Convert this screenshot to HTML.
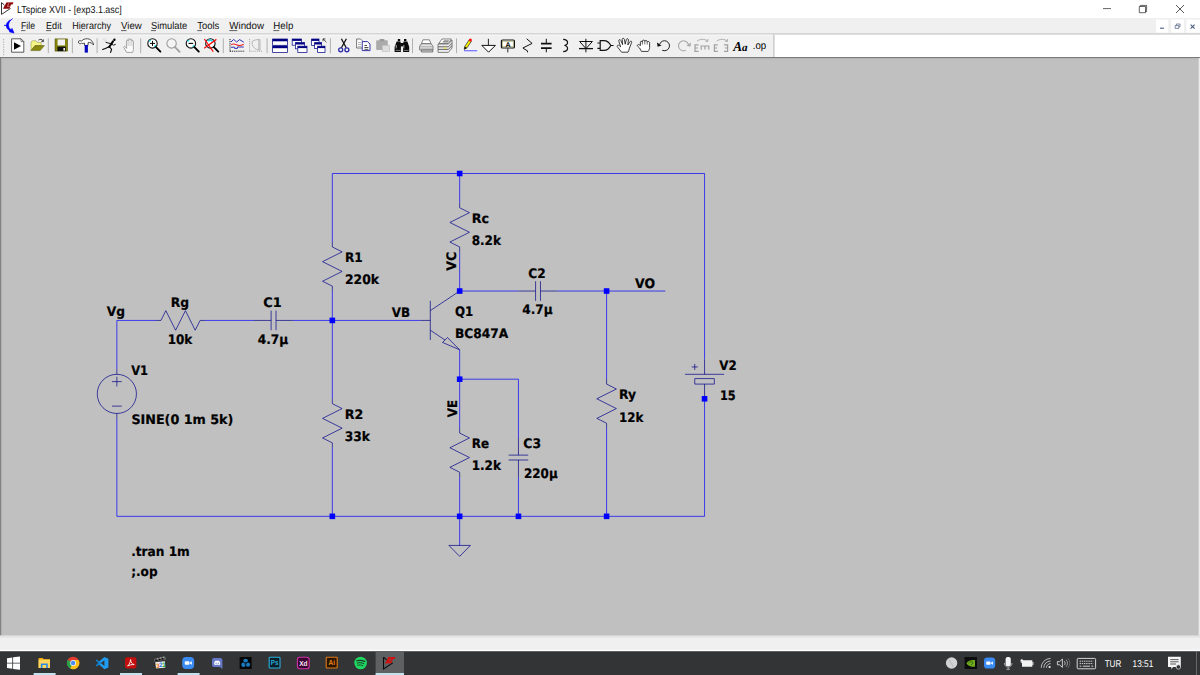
<!DOCTYPE html>
<html lang="en">
<head>
<meta charset="utf-8">
<title>LTspice XVII - [exp3.1.asc]</title>
<style>
html,body{margin:0;padding:0;background:#c0c0c0;overflow:hidden}
body{width:1200px;height:675px;position:relative;font-family:"Liberation Sans",sans-serif}
svg{position:absolute;left:0;top:0;display:block}
</style>
</head>
<body>
<svg width="1200" height="675" viewBox="0 0 1200 675" text-rendering="geometricPrecision">
<!-- window chrome -->
<rect x="0" y="0" width="1200" height="18" fill="#ffffff"/>
<rect x="0" y="18" width="1200" height="15.2" fill="#f0f0f0"/>
<rect x="0" y="33.2" width="1200" height="1.5" fill="#d9d9d9"/>
<rect x="0" y="34.7" width="773" height="22.5" fill="#f0f0f0"/>
<rect x="0" y="34.7" width="773" height="0.8" fill="#fafafa"/>
<rect x="773" y="34.7" width="1.6" height="22.5" fill="#d0d0d0"/>
<rect x="774.6" y="34.7" width="426" height="22.5" fill="#ffffff"/>
<rect x="0" y="57" width="1200" height="1.3" fill="#7a7a7a"/>
<rect x="0" y="58.3" width="1200" height="577.2" fill="#c0c0c0"/>
<rect x="0" y="58.3" width="1200" height="0.8" fill="#b4b4b4"/>
<rect x="0" y="58" width="1.3" height="577.5" fill="#828282"/>
<rect x="1.3" y="58.3" width="0.9" height="577.2" fill="#b2b2b2"/>
<rect x="1198.7" y="58" width="1.3" height="577.5" fill="#ececec"/>
<rect x="0" y="635.5" width="1200" height="2.5" fill="#e6e6e6"/>
<rect x="0" y="638" width="1200" height="12" fill="#f0f0f0"/>
<rect x="0" y="649.8" width="1200" height="1.4" fill="#ffffff"/>
<g font-family="'Liberation Sans', sans-serif" font-size="10.2" fill="#111">
<text x="17" y="12.6" textLength="104.7" lengthAdjust="spacingAndGlyphs">LTspice XVII - [exp3.1.asc]</text>
<text x="21" y="29.3" textLength="14" lengthAdjust="spacingAndGlyphs">File</text>
<text x="46" y="29.3" textLength="15.7" lengthAdjust="spacingAndGlyphs">Edit</text>
<text x="72.3" y="29.3" textLength="38.7" lengthAdjust="spacingAndGlyphs">Hierarchy</text>
<text x="121" y="29.3" textLength="20.7" lengthAdjust="spacingAndGlyphs">View</text>
<text x="151" y="29.3" textLength="36.3" lengthAdjust="spacingAndGlyphs">Simulate</text>
<text x="197.3" y="29.3" textLength="22" lengthAdjust="spacingAndGlyphs">Tools</text>
<text x="229.3" y="29.3" textLength="34.7" lengthAdjust="spacingAndGlyphs">Window</text>
<text x="273.3" y="29.3" textLength="20" lengthAdjust="spacingAndGlyphs">Help</text>
</g>

<!-- toolbar icons -->
<!-- title icon + menu icon + window controls -->
<g fill="none" stroke-linecap="butt">
<path d="M1.5 2.6 L1.5 14.4 L10.6 8.4 M1.5 2.6 L4.6 5.2" stroke="#222" stroke-width="0.9"/>
<path d="M6.200 2.400 L13.400 2.300 L12.600 4.400 L11 4.400 L9.400 8.700 L3 8.800 L4 6.800 L5.400 4.400 Z" fill="#8e0a0a" stroke="none"/>
<path d="M8.700 3.300 L7.500 6.400 L9.600 6.400" stroke="#f4eaea" stroke-width="0.500" fill="none"/>
<path d="M4 25.4 L8 25.4" stroke="#0000ff" stroke-width="0.9"/>
<path d="M12.6 18.600 L10.400 20.600" stroke="#0000ff" stroke-width="0.9"/>
<path d="M10.8 20 C9 21.8 8.4 24 8.6 26 C8.8 27.8 9.8 29 11 29.8 L12 28.4 L14 33 L9.4 31.8 L10 30.9 C7.6 29.6 6.2 27.6 6.4 25.2 C6.6 22.800 8.200 20.800 10.800 20 Z" fill="#0000ff" stroke="#0000ff" stroke-width="0.7"/>
<!-- window buttons -->
<path d="M1103 8.6 L1111 8.6" stroke="#222" stroke-width="0.7"/>
<path d="M1139.3 6.5 h6.2 v6.2 h-6.2 Z M1140.4 6.5 v-1.1 h6.2 v6.2 h-1.1" stroke="#222" stroke-width="0.7"/>
<path d="M1176 5 L1184 13 M1184 5 L1176 13" stroke="#222" stroke-width="0.75"/>
</g>
<rect x="1156" y="19.6" width="12.2" height="13" fill="#ffffff"/>
<rect x="1171" y="19.6" width="13" height="13" fill="#ffffff"/>
<rect x="1186.4" y="19.6" width="13.6" height="13" fill="#ffffff"/>
<g fill="none" stroke="#4b5c80">
<path d="M1160 28.2 h4" stroke-width="1.1"/>
<path d="M1175.2 25.6 h3.6 v2.8 h-3.6 Z M1176.4 25.4 v-1.4 h3.6 v2.8 h-1.2" stroke-width="0.7"/>
<path d="M1190.6 24.6 l4 4 M1194.6 24.6 l-4 4" stroke-width="1.1"/>
</g>
<!-- menu accelerator underlines -->
<g stroke="#000" stroke-width="0.6">
<path d="M21 30.6 h4.4 M46 30.6 h5 M80.2 30.6 h1.8 M121 30.6 h5.6 M151 30.6 h5 M197.3 30.6 h4.8 M229.3 30.6 h8 M273.3 30.6 h6"/>
</g>
<!-- toolbar gripper -->
<g fill="#b4b4b4">
<rect x="3" y="39" width="1.2" height="1.2"/><rect x="3" y="41.5" width="1.2" height="1.2"/><rect x="3" y="44" width="1.2" height="1.2"/><rect x="3" y="46.5" width="1.2" height="1.2"/><rect x="3" y="49" width="1.2" height="1.2"/><rect x="3" y="51.5" width="1.2" height="1.2"/><rect x="3" y="54" width="1.2" height="1.2"/>
</g>
<!-- separators -->
<g stroke="#a8a8a8" stroke-width="0.9">
<path d="M48.3 38.4 v14.8 M72.4 38.4 v14.8 M97.1 38.4 v14.8 M140.7 38.4 v14.8 M223.3 38.4 v14.8 M267.1 38.4 v14.8 M330.4 38.4 v14.8 M412.5 38.4 v14.8 M456.5 38.4 v14.8"/>
</g>
<!-- 1 run -->
<path d="M11.6 38.8 h9.4 l2.8 2.8 v10.6 h-12.2 Z" fill="#fff" stroke="#333" stroke-width="0.8"/>
<path d="M21 38.8 v2.8 h2.8" fill="none" stroke="#333" stroke-width="0.6"/>
<path d="M14 42.2 L21 46 L14 49.8 Z" fill="#000"/>
<!-- 2 open -->
<path d="M31 50.4 V42 l1.6 -1.2 h3.4 l1.2 1.6 h4 v3.2 h-6 Z" fill="#f4f48a" stroke="#8a8a30" stroke-width="0.5"/>
<path d="M31 50.6 L35 45.6 H44.4 L40.2 50.6 Z" fill="#8a8a10" stroke="#55550a" stroke-width="0.5"/>
<path d="M38.4 40.2 C40 38.8 42.4 39 43.2 41.2 M43.4 39.4 L43.3 41.8 L41.2 41.2" fill="none" stroke="#222" stroke-width="0.8"/>
<!-- 3 save -->
<rect x="55" y="38.9" width="12.6" height="12.2" fill="#85850c" stroke="#4a4a08" stroke-width="0.5"/>
<rect x="57.6" y="39.4" width="7.4" height="6" fill="#f2f2f2"/>
<rect x="57.4" y="46.6" width="8.4" height="4.5" fill="#111"/>
<rect x="63.4" y="48" width="1.6" height="2.6" fill="#f2f2f2"/>
<!-- 4 hammer -->
<path d="M78.6 41.2 C79.4 40.4 80.6 40.6 81.4 41.2 C82.6 39.4 85 38.6 87.6 38.8 C90.6 39 93 41.2 93.6 45 C92.2 43 90.4 42.2 88.2 42.4 L88 45.4 H84.6 L84.4 43 C83.2 43.4 82 43.8 81.4 43.2 C80.4 44 79.2 43.8 78.6 43 Z" fill="#fff" stroke="#222" stroke-width="0.8"/>
<rect x="84.7" y="45" width="3.2" height="7.6" fill="#0808c0"/>
<!-- 5 runner -->
<g fill="none" stroke="#000" stroke-linecap="round">
<circle cx="114.4" cy="39.8" r="1.2" fill="#000" stroke="none"/>
<path d="M113 41.4 L109.2 47" stroke-width="2"/>
<path d="M106 42.4 L110.6 43.6 L113.6 45.2 L115.4 44.4" stroke-width="0.9"/>
<path d="M109.4 46.6 L105.4 48.4 L102.6 49.4" stroke-width="1.1"/>
<path d="M109.6 47 L111.6 49.4 L110.6 52.4" stroke-width="1.1"/>
<path d="M103 39.4 L105.6 41.6 M104.6 38.8 L106.6 40.6" stroke="#bbb" stroke-width="0.5"/>
</g>
<!-- 6 hand disabled -->
<path d="M126.6 52.4 L123.8 47.6 C123.4 46.6 124.6 46 125.4 46.8 L126.6 48.4 V41 C126.6 39.8 128.2 39.8 128.2 41 V39.6 C128.2 38.4 130 38.4 130 39.6 V40 C130 38.8 131.8 38.8 131.8 40 V41.2 C131.8 40.2 133.4 40.2 133.4 41.2 V48 C133.6 50 133 51.4 132.6 52.4 Z" fill="#fafafa" stroke="#9a9a9a" stroke-width="0.9"/>
<path d="M128.2 41 V46 M130 40 V46 M131.8 41 V46" stroke="#b0b0b0" stroke-width="0.6" fill="none"/>
<!-- 7 zoom in -->
<g fill="none">
<circle cx="152.5" cy="43.4" r="4.7" fill="#fff" stroke="#111" stroke-width="1.1"/>
<path d="M149.300 41.600 A3.600 3.600 0 0 1 150.900 40 M154.200 46.700 A3.600 3.600 0 0 0 155.800 45.100" stroke="#22d8e8" stroke-width="1.300"/>
<path d="M150 43.4 h5 M152.5 40.9 v5" stroke="#000" stroke-width="1"/>
<path d="M156 47.2 L160.4 51.6" stroke="#000" stroke-width="1.9" stroke-linecap="round"/>
<!-- 8 zoom disabled -->
<circle cx="171.6" cy="43.4" r="4.7" fill="#f4f4f4" stroke="#9e9e9e" stroke-width="1.1"/>
<path d="M175 47.2 L179.6 51.8" stroke="#9e9e9e" stroke-width="1.800" stroke-linecap="round"/>
<!-- 9 zoom out -->
<circle cx="190.9" cy="43.4" r="4.7" fill="#fff" stroke="#111" stroke-width="1.1"/>
<path d="M187.700 41.600 A3.600 3.600 0 0 1 189.300 40 M192.600 46.700 A3.600 3.600 0 0 0 194.200 45.100" stroke="#22d8e8" stroke-width="1.300"/>
<path d="M188.6 43.4 h4.6" stroke="#000" stroke-width="1.1"/>
<path d="M194.4 47.2 L198.8 51.6" stroke="#000" stroke-width="1.9" stroke-linecap="round"/>
<!-- 10 zoom fit -->
<circle cx="210.4" cy="43.4" r="4.7" fill="#fff" stroke="#111" stroke-width="1.1"/>
<path d="M208 41 A3.4 3.4 0 0 1 212.6 41.4" stroke="#22d8e8" stroke-width="1.6"/>
<path d="M213.9 47.2 L218.3 51.6" stroke="#000" stroke-width="1.9" stroke-linecap="round"/>
<path d="M204.4 39 L213.2 51.6 M204.2 48.2 L216.4 39.4" stroke="#ff1010" stroke-width="1.3"/>
</g>
<!-- 11 waveform -->
<g fill="none">
<path d="M230 39 V51.4 M230 51.2 H244.2" stroke="#111" stroke-width="1" stroke-dasharray="1 0.9"/>
<path d="M231 42 L233.6 39.4 L236.6 42 L239.6 39.6 L243.8 42.2" stroke="#3030b0" stroke-width="1"/>
<path d="M231 44.6 C233 43.4 235 44 237 45 C239 46 241 45.6 243.8 44.2" stroke="#f02020" stroke-width="1.100"/>
<path d="M231 47.2 H234.6 V48.4 H237.4 V47 H243.8" stroke="#3030b0" stroke-width="1"/>
<!-- 12 disabled plot -->
<path d="M249.6 39 V51.4 M249.6 51.2 H263" stroke="#a4a4a4" stroke-width="1" stroke-dasharray="1 0.9"/>
<path d="M252 41.6 C254 39.8 258 39.4 260 39.6 M252 41.6 C252 46 254 49.4 259.4 50 M260 39.6 V50.4 M258.8 39.6 V50.4" stroke="#a8a8a8" stroke-width="0.800"/>
</g>
<!-- 13 tile -->
<g>
<rect x="272.6" y="39" width="14.8" height="6.3" fill="#fff" stroke="#1c1c90" stroke-width="0.8"/>
<rect x="272.6" y="39" width="14.8" height="2.3" fill="#000080"/>
<rect x="272.6" y="45.9" width="14.8" height="6.5" fill="#fff" stroke="#1c1c90" stroke-width="0.8"/>
<rect x="272.6" y="45.9" width="14.8" height="2.3" fill="#000080"/>
<!-- 14 cascade -->
<rect x="292.2" y="39" width="9.2" height="6.2" fill="#fff" stroke="#1c1c90" stroke-width="0.8"/>
<rect x="292.2" y="39" width="9.2" height="1.9" fill="#000080"/>
<rect x="295.4" y="42.6" width="9.2" height="6.2" fill="#fff" stroke="#1c1c90" stroke-width="0.8"/>
<rect x="295.4" y="42.6" width="9.2" height="1.9" fill="#000080"/>
<rect x="297.8" y="46.2" width="9.2" height="6.2" fill="#fff" stroke="#1c1c90" stroke-width="0.8"/>
<rect x="297.8" y="46.2" width="9.2" height="1.9" fill="#000080"/>
<!-- 15 cascade arrow -->
<rect x="311.6" y="39" width="7.4" height="6.4" fill="#fff" stroke="#1c1c90" stroke-width="0.8"/>
<rect x="311.6" y="39" width="7.4" height="1.9" fill="#000080"/>
<rect x="314.6" y="42.6" width="7" height="6" fill="#fff" stroke="#1c1c90" stroke-width="0.8"/>
<rect x="314.6" y="42.6" width="7" height="1.9" fill="#000080"/>
<rect x="317.6" y="46.2" width="7.4" height="6.2" fill="#fff" stroke="#1c1c90" stroke-width="0.8"/>
<rect x="317.6" y="46.2" width="7.4" height="1.9" fill="#000080"/>
<path d="M326.4 42.2 L323.2 39 M323 41.2 V38.9 H325.4" fill="none" stroke="#222" stroke-width="0.8"/>
</g>
<!-- 16 cut -->
<g fill="none">
<path d="M341.400 38.800 L346.200 47.800 M346.400 38.800 L341.400 47.800" stroke="#111" stroke-width="1.300"/>
<circle cx="340.700" cy="49.800" r="2" stroke="#2828a8" stroke-width="1.300"/>
<circle cx="346.900" cy="49.800" r="2" stroke="#2828a8" stroke-width="1.300"/>
</g>
<!-- 17 copy -->
<path d="M356.6 39 h4 l2 2 v7 h-6 Z" fill="#fff" stroke="#444" stroke-width="0.7"/>
<path d="M358 42.500 h3 M358 44.500 h3 M358 46.500 h3" fill="none" stroke="#9a9a9a" stroke-width="0.700"/>
<path d="M362.2 41.6 h5.2 l2.6 2.4 v6.6 h-7.8 Z" fill="#fff" stroke="#2020a0" stroke-width="0.9"/>
<path d="M364.400 45.500 h2.600 M364.400 47.500 h4 M364.400 49.300 h4" fill="none" stroke="#222" stroke-width="0.800"/>
<!-- 18 paste disabled -->
<rect x="376.2" y="40.2" width="11.6" height="9.8" rx="0.8" fill="#ababab"/>
<rect x="379.6" y="39" width="4.8" height="2.2" rx="0.6" fill="#9a9a9a"/>
<rect x="382.2" y="45.2" width="7.2" height="6.2" fill="#dedede" stroke="#b0b0b0" stroke-width="0.5"/>
<!-- 19 binoculars -->
<path d="M397.800 39 h2.400 v2.200 h-2.400 Z M404 39 h2.400 v2.200 h-2.400 Z" fill="#0a0a0a"/>
<path d="M396.600 41.600 h3.800 l0.500 2 v8.400 h-6.300 v-5 Z M403.600 41.600 h3.800 l1.800 5.400 v5 h-6.100 v-8.400 Z" fill="#0a0a0a"/>
<rect x="400.600" y="43" width="3.200" height="3.400" fill="#0a0a0a"/>
<path d="M396.200 45 v3.400 M403.800 45 v3.400" stroke="#f4f4f4" stroke-width="0.700" fill="none"/>
<path d="M395.600 50.400 h4.800 M403.800 50.400 h4.800" stroke="#e8e8e8" stroke-width="0.500" fill="none"/>
<!-- 20 print -->
<g stroke="#555" stroke-width="0.7">
<path d="M423 39.8 h6.4 l1.6 4 h-9.6 Z" fill="#fff"/>
<path d="M421.2 43.8 h10 l1.8 2.6 v3.6 h-13.4 v-3.6 Z" fill="#e4e4e4"/>
<path d="M421.4 50 h11.4 v2 h-11.4 Z" fill="#d0d0d0"/>
<path d="M420 46.6 h12.8 M420.4 48.2 h12.2" fill="none" stroke="#8a8a8a" stroke-width="0.5"/>
<!-- 21 print preview -->
<path d="M442 39 h9.4 l-3 4.4 h-9.6 Z" fill="#fff"/>
<path d="M444 40.2 h5.4 l-1.6 2.4 h-5.4 Z" fill="#909090" stroke="none"/>
<path d="M438 44 h10.4 l3.6 -4 v8 l-3.6 4.4 h-10.4 Z" fill="#ececec"/>
<path d="M438 46.8 h10.4 l3.6 -3.6 M438 49.4 h10.4 l3.6 -3.8" fill="none" stroke="#444" stroke-width="0.8"/>
</g>
<rect x="443.6" y="47.6" width="3" height="1" fill="#f0e020"/>
<!-- 22 pencil -->
<path d="M464 50.7 H477.2" stroke="#7a7aff" stroke-width="1.3"/>
<path d="M464.2 49.4 L464.8 46.4 L469.2 39.8 L471.4 41.2 L467 47.8 Z" fill="#f4f000" stroke="#222" stroke-width="0.7"/>
<path d="M464.2 49.4 L464.8 46.6 L467 48 Z" fill="#111"/>
<circle cx="470.4" cy="39.9" r="1.5" fill="#ff1010"/>
<!-- 23 ground -->
<path d="M488.4 38.8 V45.2" stroke="#111" stroke-width="0.9"/>
<path d="M481.8 45.4 H495.4 L488.6 52.2 Z" fill="#fff" stroke="#111" stroke-width="1"/>
<!-- 24 label -->
<rect x="501.4" y="40" width="13" height="8" rx="1" fill="#fff" stroke="#111" stroke-width="1.2"/>
<rect x="502.6" y="41.2" width="10.6" height="5.6" fill="none" stroke="#8a8a30" stroke-width="0.5"/>
<path d="M507.8 48.4 V52.4" stroke="#111" stroke-width="0.9"/>
<text x="505.400" y="46.900" font-family="'Liberation Sans', sans-serif" font-weight="bold" font-size="7" fill="#000">A</text>
<!-- 25-30 components -->
<g fill="none" stroke="#111" stroke-width="1">
<path d="M526.7 38.8 L532.1 43.4 L522.9 48 L527.5 50.9 V52.3"/>
<path d="M546.3 38.8 V43.2 M546.3 48.2 V52.3"/>
<path d="M541 43.600 H551.600 M541 48.100 H551.600" stroke-width="1.600"/>
<path d="M563.200 39.400 C568.800 39.600 568.800 45.200 564.400 45.500 C568.800 45.800 568.800 51.400 563.200 51.600" stroke-width="1.200"/>
<path d="M585.900 38.800 V52.300 M579.600 41.500 H592.400 L586 48.600 Z"/><path d="M579 48.600 H593" stroke-width="1.300"/>
<path d="M597.400 43 H600.200 M597.400 48.400 H600.200 M600.200 40.600 H604 C607.600 40.600 609.600 43.200 610.800 45.500 C609.600 47.800 607.600 50.400 604 50.400 H600.200 Z M610.800 45.500 H613.600" stroke-width="1.200"/>
</g>
<!-- 31 open hand -->
<path d="M621.6 52.2 L617.4 46.8 C616.6 45.6 618 44.6 619.2 45.6 L620.6 46.8 L618.8 41 C618.4 39.6 620.2 39 620.8 40.4 L622.6 44.6 L622.2 39.4 C622.2 38 624.2 38 624.4 39.4 L625.2 44.2 L626.4 39.4 C626.8 38.2 628.6 38.6 628.4 40 L627.8 45 L630 41.6 C630.8 40.6 632.2 41.4 631.6 42.6 L629.4 48.2 C629 50 628.6 51.2 628 52.2 Z" fill="#fff" stroke="#111" stroke-width="0.8"/>
<!-- 32 closed hand -->
<path d="M641.4 51.4 L639.6 48 L637.6 46.2 C636.8 45.2 638 44.2 639.2 44.8 L640.4 45.6 V42.2 C640.4 41 642.2 41 642.4 42.2 V41 C642.6 39.8 644.6 39.8 644.8 41 V41.4 C645 40.2 647 40.2 647.2 41.4 V42.2 C647.4 41.2 649.4 41.2 649.6 42.6 V47.6 C649.4 49.4 648.8 50.4 648.2 51.4 Z" fill="#fff" stroke="#111" stroke-width="0.8"/>
<path d="M642.4 42.2 V44.6 M644.8 41.4 V44.4 M647.2 42.2 V44.6" stroke="#111" stroke-width="0.6" fill="none"/>
<!-- 33 undo / 34 redo -->
<g fill="none">
<path d="M659.8 44 A5 5 0 1 1 662.2 50.2" stroke="#222" stroke-width="1"/>
<path d="M657 42.6 L657.6 46.8 L661.6 45.4 Z" fill="#111" stroke="none"/>
<path d="M688.2 44 A5 5 0 1 0 685.8 50.2" stroke="#a8a8a8" stroke-width="1.100"/>
<path d="M691 42.6 L690.4 46.8 L686.4 45.4 Z" fill="#a8a8a8" stroke="none"/>
<!-- 35 / 36 rotate mirror -->
<g stroke="#a0a0a0" stroke-width="1.200">
<path d="M698.6 44.8 H695 V51.4 H698.6 M695 48 H698"/>
<path d="M701.2 49.8 V46 H708.8 V49.8 M705 46 V49.4"/>
<path d="M697 41.2 C700 38.8 705 38.6 707.6 41.2 M707.8 39 V41.4 H705.6" stroke-width="0.800"/>
<path d="M717.8 44.8 H714.4 V51.4 H717.8 M714.4 48 H717.2"/>
<path d="M724 44.8 H727.6 V51.4 H724 M727.6 48 H724.8"/>
<path d="M716.6 41.2 C719.6 38.8 724.6 38.6 727.2 41.2 M727.4 39 V41.4 H725.2" stroke-width="0.800"/>
</g>
</g>
<!-- 37 Aa, 38 .op -->
<text x="733.200" y="50.600" textLength="14.400" lengthAdjust="spacingAndGlyphs" font-family="'Liberation Serif', serif" font-style="italic" font-weight="bold" font-size="13.600" fill="#000">A<tspan font-size="11.400">a</tspan></text>
<text x="752.8" y="48.5" textLength="13.4" lengthAdjust="spacingAndGlyphs" font-family="'Liberation Sans', sans-serif" font-size="10.600" fill="#000">.op</text>

<!-- schematic -->
<g fill="none" stroke="#0000ff" stroke-width="0.7">
<path d="M332.34 242.06 L332.34 173.5 L704.55 173.5 L704.55 359.61"/>
<path d="M459.67 173.5 L459.67 202.88"/>
<path d="M459.67 251.86 L459.67 291.04"/>
<path d="M459.67 291.04 L518.44 291.04"/>
<path d="M557.62 291.04 L665.37 291.04"/>
<path d="M606.6 291.04 L606.6 379.19"/>
<path d="M606.6 428.17 L606.6 516.33"/>
<path d="M704.55 398.78 L704.55 516.33 L116.85 516.33 L116.85 418.38"/>
<path d="M116.85 369.4 L116.85 320.43 L156.03 320.43"/>
<path d="M205 320.43 L253.98 320.43"/>
<path d="M293.16 320.43 L420.5 320.43"/>
<path d="M332.34 291.04 L332.34 398.78"/>
<path d="M332.34 447.76 L332.34 516.33"/>
<path d="M459.67 349.81 L459.67 428.17"/>
<path d="M459.67 477.14 L459.67 545.71"/>
<path d="M459.67 379.19 L518.44 379.19 L518.44 437.96"/>
<path d="M518.44 477.14 L518.44 516.33"/>
</g>
<g fill="none" stroke="#000088" stroke-width="0.7">
<path d="M332.34 242.06 L332.34 246.96 L342.13 251.86 L322.54 261.65 L342.13 271.45 L322.54 281.25 L332.34 286.14 L332.34 291.04 M459.67 202.88 L459.67 207.78 L469.47 212.68 L449.88 222.47 L469.47 232.27 L449.88 242.06 L459.67 246.96 L459.67 251.86 M332.34 398.78 L332.34 403.68 L342.13 408.58 L322.54 418.37 L342.13 428.17 L322.54 437.96 L332.34 442.86 L332.34 447.76 M459.67 428.17 L459.67 433.07 L469.47 437.96 L449.88 447.76 L469.47 457.55 L449.88 467.35 L459.67 472.25 L459.67 477.14 M606.6 379.19 L606.6 384.09 L616.39 388.99 L596.8 398.78 L616.39 408.58 L596.8 418.38 L606.6 423.27 L606.6 428.17 M156.03 320.43 L160.93 320.43 L165.82 310.63 L175.62 330.22 L185.41 310.63 L195.21 330.22 L200.11 320.43 L205 320.43 M253.98 320.43 L271.12 320.43 M276.02 320.43 L293.16 320.43 M271.12 310.63 L271.12 330.22 M276.02 310.63 L276.02 330.22 M518.44 291.04 L535.59 291.04 M540.48 291.04 L557.62 291.04 M535.59 281.24 L535.59 300.83 M540.48 281.24 L540.48 300.83 M518.44 437.96 L518.44 455.11 M518.44 460 L518.44 477.14 M508.65 455.11 L528.24 455.11 M508.65 460 L528.24 460 M420.5 320.42 L430.29 320.42 M430.29 300.83 L430.29 340.01 M430.29 310.63 L459.68 291.04 M430.29 330.22 L444.98 340.01 M442.53 342.46 L459.68 349.81 L447.43 337.57 Z M448.9 545.41 L470.45 545.41 L459.67 556.36 Z M116.85 369.4 L116.85 374.3 M116.85 413.48 L116.85 418.38 M111.95 381.64 L121.75 381.64 M116.85 376.75 L116.85 386.54 M111.95 406.13 L121.75 406.13 M704.55 359.61 L704.55 374.3 M684.96 374.3 L724.14 374.3 M694.75 378.58 L714.34 378.58 L714.34 384.09 L694.75 384.09 Z M704.55 384.09 L704.55 398.79 M691.69 366.95 L697.82 366.95 M694.75 363.89 L694.75 370.01"/>
<circle cx="116.85" cy="393.89" r="19.59"/>
</g>
<g fill="#0000ff">
<rect x="456.87" y="170.7" width="5.6" height="5.6"/>
<rect x="456.87" y="288.24" width="5.6" height="5.6"/>
<rect x="329.54" y="317.62" width="5.6" height="5.6"/>
<rect x="603.8" y="288.24" width="5.6" height="5.6"/>
<rect x="456.87" y="376.39" width="5.6" height="5.6"/>
<rect x="329.54" y="513.53" width="5.6" height="5.6"/>
<rect x="456.87" y="513.53" width="5.6" height="5.6"/>
<rect x="515.64" y="513.53" width="5.6" height="5.6"/>
<rect x="603.8" y="513.53" width="5.6" height="5.6"/>
<rect x="701.75" y="395.98" width="5.6" height="5.6"/>
</g>
<g font-family="'DejaVu Sans', 'Liberation Sans', sans-serif" font-weight="bold" font-size="13.1" fill="#000" stroke="#000" stroke-width="0.22">
<text x="106.7" y="316.4" textLength="18.3" lengthAdjust="spacingAndGlyphs">Vg</text>
<text x="170.7" y="307.2" textLength="18.3" lengthAdjust="spacingAndGlyphs">Rg</text>
<text x="167.7" y="343.6" textLength="24.6" lengthAdjust="spacingAndGlyphs">10k</text>
<text x="263.3" y="307.3" textLength="18.4" lengthAdjust="spacingAndGlyphs">C1</text>
<text x="257.7" y="343.5" textLength="30.6" lengthAdjust="spacingAndGlyphs">4.7µ</text>
<text x="345" y="262.3" textLength="17.7" lengthAdjust="spacingAndGlyphs">R1</text>
<text x="345" y="284" textLength="34" lengthAdjust="spacingAndGlyphs">220k</text>
<text x="391.7" y="316.6" textLength="18.3" lengthAdjust="spacingAndGlyphs">VB</text>
<text x="471.7" y="223.1" textLength="17.3" lengthAdjust="spacingAndGlyphs">Rc</text>
<text x="471.7" y="245.3" textLength="29.3" lengthAdjust="spacingAndGlyphs">8.2k</text>
<text x="528.3" y="278.3" textLength="17.4" lengthAdjust="spacingAndGlyphs">C2</text>
<text x="522.3" y="314.3" textLength="30.4" lengthAdjust="spacingAndGlyphs">4.7µ</text>
<text x="635" y="287.7" textLength="20" lengthAdjust="spacingAndGlyphs">VO</text>
<text x="455" y="316.3" textLength="18.3" lengthAdjust="spacingAndGlyphs">Q1</text>
<text x="455" y="337.7" textLength="53.3" lengthAdjust="spacingAndGlyphs">BC847A</text>
<text x="719.3" y="370.4" textLength="17.4" lengthAdjust="spacingAndGlyphs">V2</text>
<text x="720" y="399.8" textLength="15.7" lengthAdjust="spacingAndGlyphs">15</text>
<text x="619" y="399.4" textLength="17" lengthAdjust="spacingAndGlyphs">Ry</text>
<text x="619" y="421.6" textLength="24.3" lengthAdjust="spacingAndGlyphs">12k</text>
<text x="471.7" y="448" textLength="17.3" lengthAdjust="spacingAndGlyphs">Re</text>
<text x="471.7" y="470.3" textLength="29.3" lengthAdjust="spacingAndGlyphs">1.2k</text>
<text x="523.3" y="448" textLength="17.7" lengthAdjust="spacingAndGlyphs">C3</text>
<text x="524" y="478" textLength="33.7" lengthAdjust="spacingAndGlyphs">220µ</text>
<text x="131.2" y="374.8" textLength="16.9" lengthAdjust="spacingAndGlyphs">V1</text>
<text x="131.4" y="424" textLength="102" lengthAdjust="spacingAndGlyphs">SINE(0 1m 5k)</text>
<text x="344.8" y="419.3" textLength="18.5" lengthAdjust="spacingAndGlyphs">R2</text>
<text x="344.8" y="441.1" textLength="25.2" lengthAdjust="spacingAndGlyphs">33k</text>
<text x="131.2" y="556.3" textLength="58.6" lengthAdjust="spacingAndGlyphs">.tran 1m</text>
<text x="131.2" y="575.8" textLength="26.4" lengthAdjust="spacingAndGlyphs">;.op</text>
<text transform="translate(456 270.7) rotate(-90)" textLength="19" lengthAdjust="spacingAndGlyphs">VC</text>
<text transform="translate(456.7 417.3) rotate(-90)" textLength="17.3" lengthAdjust="spacingAndGlyphs">VE</text>
</g>
<!-- taskbar -->
<rect x="0" y="651.3" width="1200" height="23.7" fill="#333436"/>
<rect x="375.6" y="651.3" width="28.4" height="23.7" fill="#5f6062"/>
<g fill="#bfe2ee">
<rect x="33.6" y="673" width="22" height="2"/>
<rect x="120" y="673" width="22" height="2"/>
<rect x="177.6" y="673" width="22" height="2"/>
<rect x="375.6" y="673" width="28.4" height="2"/>
</g>
<!-- start -->
<path d="M7 658.2 L12.3 657.4 V662.7 H7 Z M13.1 657.3 L20 656.4 V662.7 H13.1 Z M7 663.5 H12.3 V668.8 L7 668 Z M13.1 663.5 H20 V669.8 L13.1 668.9 Z" fill="#ffffff"/>
<!-- explorer -->
<path d="M38.6 658 h4.2 l1 1.2 h6.2 v8.8 h-11.4 Z" fill="#f2a900"/>
<rect x="38.6" y="659.6" width="11.4" height="8.4" fill="#ffd75e"/>
<path d="M40.8 668 v-4.6 h7 v4.6 h-1.7 v-2.9 h-3.6 v2.9 Z" fill="#2a8be6"/>
<!-- chrome -->
<g>
<circle cx="73.1" cy="663" r="6.2" fill="#e33b2e"/>
<path d="M73.1 663 L67.73 659.9 A6.2 6.2 0 0 0 73.1 669.2 L76.2 663.9 Z" fill="#2ca14a"/>
<path d="M73.1 663 L70 668.37 A6.2 6.2 0 0 0 78.47 659.9 L73.1 659.9 Z" fill="#fbc116"/>
<path d="M73.1 663 L67.73 659.9 A6.2 6.2 0 0 0 70 668.37 Z" fill="#2ca14a"/>
<circle cx="73.1" cy="663" r="2.9" fill="#f4f4f4"/>
<circle cx="73.1" cy="663" r="2.2" fill="#4a8af4"/>
</g>
<!-- vscode -->
<path d="M104.4 657 L108.4 658.8 V667.4 L104.4 669.2 L97.4 663.1 Z M104.4 660.2 L100.8 663.1 L104.4 666 Z" fill="#1f9cf0" fill-rule="evenodd"/>
<path d="M95.6 660.6 L96.8 659.6 L101.4 663.1 L96.8 666.6 L95.6 665.6 L98.4 663.1 Z" fill="#0f7fd0"/>
<!-- acrobat -->
<rect x="125" y="657.2" width="11.4" height="11.4" rx="2" fill="#c40f0f"/>
<path d="M127.6 666 C129.4 664.4 130.4 662 130.6 659.6 C130.8 662.4 132 664.2 134.2 664.6 C131.8 664.4 129.4 665 127.6 666 Z" fill="none" stroke="#fff" stroke-width="0.9" stroke-linejoin="round"/>
<!-- mpc -->
<path d="M154.400 659.400 L164.800 656.800 L165.400 659.400 L155 662 Z" fill="#111" stroke="#cfcfcf" stroke-width="0.400"/>
<path d="M156.600 659 l1.200 -0.300 l0.400 1.700 M159.600 658.200 l1.200 -0.300 l0.400 1.700 M162.600 657.500 l1.200 -0.300 l0.400 1.700" stroke="#f0f0f0" stroke-width="0.600" fill="none"/>
<path d="M154.800 661.800 L165.400 660.800 L165.800 668 L155.600 669 Z" fill="#f4f4f4" stroke="#111" stroke-width="0.700"/>
<g font-family="'Liberation Sans', sans-serif" font-weight="bold" font-size="6.4">
<text x="155.900" y="667.600" fill="#f07820">3</text><text x="159" y="667.400" fill="#2a78e0">2</text><text x="162.200" y="667.200" fill="#28a030">1</text>
</g>
<!-- zoom -->
<rect x="182.2" y="657" width="12" height="12" rx="4" fill="#3a8cf4"/>
<rect x="184.8" y="661.2" width="4.6" height="3.6" rx="0.8" fill="#fff"/>
<path d="M189.9 662.6 L191.8 661.2 V664.8 L189.9 663.4 Z" fill="#fff"/>
<!-- discord -->
<path d="M212 660 a2 2 0 0 1 2 -2 h6.4 a2 2 0 0 1 2 2 v9 l-2.4 -2 h-6 a2 2 0 0 1 -2 -2 Z" fill="#6778c8"/>
<path d="M214.2 664.6 C214 662.6 214.6 661.4 215.4 660.8 H219 C219.8 661.4 220.4 662.6 220.2 664.6 C219.4 665.2 218.8 665.2 218.6 664.8 H215.8 C215.600 665.2 215 665.2 214.2 664.600 Z" fill="#fff"/>
<circle cx="216.1" cy="663.2" r="0.65" fill="#6778c8"/><circle cx="218.3" cy="663.2" r="0.65" fill="#6778c8"/>
<!-- dark app -->
<rect x="239.600" y="657" width="12" height="12" fill="#050505"/>
<g fill="#1e8fe0" fill-opacity="0.85">
<ellipse cx="245.600" cy="660.600" rx="2.300" ry="1.900"/>
<ellipse cx="243.400" cy="664.800" rx="2.100" ry="2.200"/>
<ellipse cx="248" cy="664.600" rx="2.100" ry="2.200"/>
</g>
<circle cx="245.700" cy="663.400" r="1.200" fill="#0a2a48"/>
<!-- Ps Xd Ai -->
<rect x="269.2" y="657.2" width="10.8" height="10.8" rx="0.8" fill="#0a1c26" stroke="#2aaedc" stroke-width="1.1"/>
<rect x="297.4" y="657.2" width="11.8" height="11.600" rx="2.6" fill="#3a0230" stroke="#d030a8" stroke-width="1.1"/>
<rect x="326.2" y="657.2" width="11" height="10.8" rx="0.8" fill="#2a1400" stroke="#e07a14" stroke-width="1.1"/>
<g font-family="'Liberation Sans', sans-serif" font-weight="bold" font-size="7.4">
<text x="270.800" y="665.400" textLength="7.600" lengthAdjust="spacingAndGlyphs" fill="#2aaedc">Ps</text>
<text x="299.200" y="665.800" textLength="8.400" lengthAdjust="spacingAndGlyphs" fill="#fbe4f6">Xd</text>
<text x="328.600" y="665.400" textLength="6.400" lengthAdjust="spacingAndGlyphs" fill="#f08a1c">Ai</text>
</g>
<!-- spotify -->
<circle cx="360.6" cy="663" r="6.3" fill="#1fd660"/>
<g fill="none" stroke="#1a3a28" stroke-linecap="round">
<path d="M356.800 660.800 C359.400 660 362.200 660.200 364.600 661.400" stroke-width="1.2"/>
<path d="M357.200 663 C359.400 662.400 361.800 662.600 363.800 663.600" stroke-width="1"/>
<path d="M357.600 665.200 C359.400 664.700 361.200 664.900 362.800 665.700" stroke-width="0.9"/>
</g>
<!-- LTspice task icon -->
<g transform="translate(382 654.600)">
<path d="M1.500 2.600 L1.500 14.400 L10.800 8.300 M1.500 2.600 L4.600 5.200" fill="none" stroke="#0a0a0a" stroke-width="1.100"/>
<path d="M6.200 2.400 L13.400 2.300 L12.600 4.400 L11 4.400 L9.400 8.700 L3 8.800 L4 6.800 L5.400 4.400 Z" fill="#d01010"/>
<path d="M8.700 3.300 L7.500 6.400 L9.600 6.400" stroke="#5f6062" stroke-width="0.600" fill="none"/>
</g>
<!-- tray -->
<circle cx="951.6" cy="663" r="5.700" fill="#d2d2d2"/>
<path d="M949 659.600 C950.400 661 950 662.600 951.400 663.600 C952.600 664.400 952 666.200 953.400 667" fill="none" stroke="#bdbdbd" stroke-width="1.2"/>
<rect x="964.6" y="657" width="12.400" height="12" fill="#0c0c0c"/>
<path d="M966.400 663.200 C968 660.600 971.600 659.800 975 660.200 V666.800 C971.600 667 968 666 966.400 663.200 Z" fill="#6fae1c"/>
<path d="M968.400 663.200 C969.400 661.800 971.200 661.400 972.600 662 C973.200 663.200 972.400 664.600 970.800 664.600" fill="none" stroke="#20400a" stroke-width="0.600"/>
<rect x="984" y="657.400" width="11.200" height="11.200" rx="3.400" fill="#3a8cf4"/>
<rect x="986.200" y="661.400" width="4.300" height="3.400" rx="0.700" fill="#fff"/>
<path d="M991 662.700 L992.900 661.400 V664.800 L991 663.500 Z" fill="#fff"/>
<!-- mic -->
<rect x="1005.600" y="657" width="5.200" height="9.200" rx="2" fill="#f4f4f4"/>
<path d="M1004.400 663 C1004.400 668.400 1012 668.400 1012 663 M1008.200 667.200 V669.200 M1006.400 669.300 H1010" fill="none" stroke="#b0b0b0" stroke-width="0.900"/>
<!-- battery -->
<rect x="1022" y="660.200" width="10.400" height="6.600" rx="0.600" fill="#f2f2f2"/>
<rect x="1032.400" y="662" width="1" height="3" fill="#f2f2f2"/>
<circle cx="1021.800" cy="660.600" r="1.300" fill="#f2f2f2"/>
<path d="M1020.600 662 L1023.600 664" stroke="#f2f2f2" stroke-width="0.800"/>
<!-- wifi -->
<g fill="none" stroke="#c8c8c8" stroke-width="0.900">
<path d="M1041.200 667.800 A9.400 9.400 0 0 1 1050.600 658.400"/>
<path d="M1043.800 667.800 A6.800 6.800 0 0 1 1050.600 661"/>
<path d="M1046.400 667.800 A4.200 4.200 0 0 1 1050.600 663.600"/>
</g>
<circle cx="1049.600" cy="667" r="1.100" fill="#f4f4f4"/>
<!-- speaker -->
<path d="M1057.400 661.600 H1059.600 L1062.400 659 V667.400 L1059.600 664.800 H1057.400 Z" fill="none" stroke="#f0f0f0" stroke-width="0.800" stroke-linejoin="round"/>
<g fill="none" stroke="#e0e0e0" stroke-width="0.800">
<path d="M1064.200 661.200 A2.600 2.600 0 0 1 1064.200 665.200"/>
<path d="M1066 659.600 A5 5 0 0 1 1066 666.800" stroke="#b0b0b0"/>
<path d="M1067.800 658.200 A7.200 7.200 0 0 1 1067.800 668.200" stroke="#707070"/>
</g>
<!-- keyboard -->
<rect x="1077.200" y="658.400" width="18.400" height="10.400" rx="1" fill="none" stroke="#e8e8e8" stroke-width="0.900"/>
<path d="M1079.600 661.200 H1093.200 M1079.600 663.600 H1093.200" stroke="#e8e8e8" stroke-width="0.900" stroke-dasharray="1.400 0.800"/>
<path d="M1079.600 666.200 H1081.400 M1082.800 666.200 H1090 M1091.400 666.200 H1093.200" stroke="#e8e8e8" stroke-width="0.900"/>
<g font-family="'Liberation Sans', sans-serif" font-size="9.9" fill="#ffffff">
<text x="1104.700" y="666.900" textLength="16.600" lengthAdjust="spacingAndGlyphs">TUR</text>
<text x="1132.600" y="666.900" textLength="20.700" lengthAdjust="spacingAndGlyphs">13:51</text>
</g>
<!-- notification -->
<path d="M1168 656.800 H1180.800 V667 H1173.200 L1171.200 669 V667 H1168 Z" fill="#f4f4f4"/>
<path d="M1170.200 659.600 H1178.600 M1170.200 661.800 H1178.600 M1170.200 664 H1176" stroke="#333436" stroke-width="0.800"/>
<circle cx="1178.400" cy="667" r="2.200" fill="#333436" stroke="#e0e0e0" stroke-width="0.700"/>
<rect x="1196.200" y="651.300" width="0.600" height="23.700" fill="#8a8a8a"/>

</svg>
</body>
</html>
